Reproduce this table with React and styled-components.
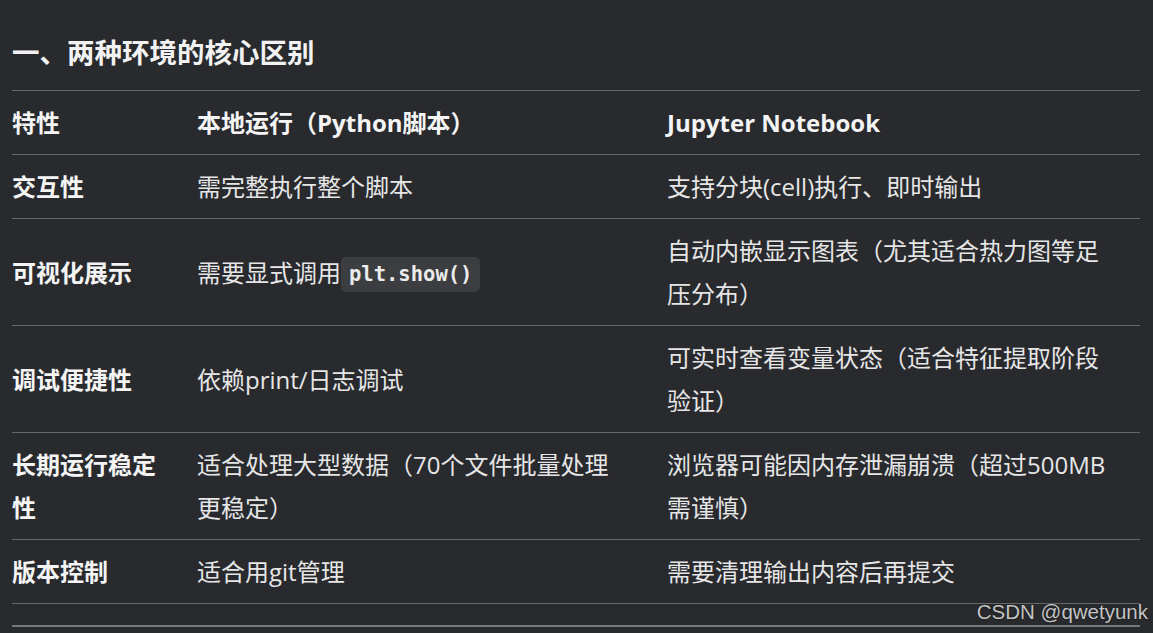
import React from "react";
import styled, { createGlobalStyle } from "styled-components";

const Global = createGlobalStyle`
  html, body {
    margin: 0;
    padding: 0;
    background: #282a2e;
  }
  body {
    font-family: "Open Sans", "Noto Sans CJK SC", sans-serif;
    color: #ececec;
  }
`;

const Page = styled.div`
  position: relative;
  width: 1153px;
  height: 633px;
  overflow: hidden;
  box-sizing: border-box;
  padding: 0 13px 0 12px;
`;

const Title = styled.h2`
  margin: 0;
  padding-top: 32px;
  height: 58px;
  font-size: 27.5px;
  line-height: 38px;
  font-weight: 700;
  color: #f2f2f2;
  font-family: "Noto Sans CJK SC", sans-serif;
`;

const Table = styled.table`
  width: 100%;
  table-layout: fixed;
  border-collapse: collapse;
  border-bottom: 1px solid #666769;
`;

const Col = styled.col`
  width: ${(p) => p.$w};
`;

const Cell = styled.td`
  border-top: 1px solid #666769;
  padding: 10px ${(p) => p.$pr || 38}px 10px 0;
  font-size: 24px;
  line-height: 43px;
  vertical-align: middle;
  font-weight: ${(p) => (p.$bold ? 700 : 400)};
  color: ${(p) => (p.$bold ? "#f4f4f4" : "#e6e6e6")};
`;

const HeadCell = styled.th`
  border-top: 1px solid #666769;
  padding: 10px ${(p) => p.$pr || 38}px 10px 0;
  font-size: 24px;
  line-height: 43px;
  text-align: left;
  vertical-align: middle;
  font-weight: 700;
  color: #f4f4f4;
`;

const Code = styled.code`
  display: inline-block;
  font-family: "DejaVu Sans Mono", "Liberation Mono", monospace;
  font-weight: 700;
  font-size: 20.5px;
  line-height: 35px;
  padding: 0 8px;
  border-radius: 5px;
  background: #3c3d40;
  color: #ececec;
  vertical-align: 1px;
`;

const Rule = styled.hr`
  margin: 21px 0 0 0;
  border: none;
  height: 2px;
  background: #78797b;
`;

const Watermark = styled.div`
  position: absolute;
  right: 5px;
  top: 598px;
  font-family: "Liberation Sans", Arial, sans-serif;
  font-size: 20.5px;
  line-height: 28px;
  color: #c4c4c4;
  text-shadow: 0 0 2px rgba(0, 0, 0, 0.6);
`;

const rows = [
  { k: "交互性", a: "需完整执行整个脚本", b: "支持分块(cell)执行、即时输出" },
  {
    k: "可视化展示",
    a: (
      <>
        需要显式调用<Code>plt.show()</Code>
      </>
    ),
    b: "自动内嵌显示图表（尤其适合热力图等足压分布）",
  },
  { k: "调试便捷性", a: "依赖print/日志调试", b: "可实时查看变量状态（适合特征提取阶段验证）" },
  {
    k: "长期运行稳定性",
    a: "适合处理大型数据（70个文件批量处理更稳定）",
    b: "浏览器可能因内存泄漏崩溃（超过500MB需谨慎）",
  },
  { k: "版本控制", a: "适合用git管理", b: "需要清理输出内容后再提交" },
];

export default function App() {
  return (
    <>
      <Global />
      <Page>
        <Title>一、两种环境的核心区别</Title>
        <Table>
          <colgroup>
            <Col $w="185px" />
            <Col $w="470px" />
            <Col $w="auto" />
          </colgroup>
          <thead>
            <tr>
              <HeadCell>特性</HeadCell>
              <HeadCell>本地运行（Python脚本）</HeadCell>
              <HeadCell $pr={30}>Jupyter Notebook</HeadCell>
            </tr>
          </thead>
          <tbody>
            {rows.map((r) => (
              <tr key={r.k}>
                <Cell $bold>{r.k}</Cell>
                <Cell>{r.a}</Cell>
                <Cell $pr={30}>{r.b}</Cell>
              </tr>
            ))}
          </tbody>
        </Table>
        <Rule />
        <Watermark>CSDN @qwetyunk</Watermark>
      </Page>
    </>
  );
}
